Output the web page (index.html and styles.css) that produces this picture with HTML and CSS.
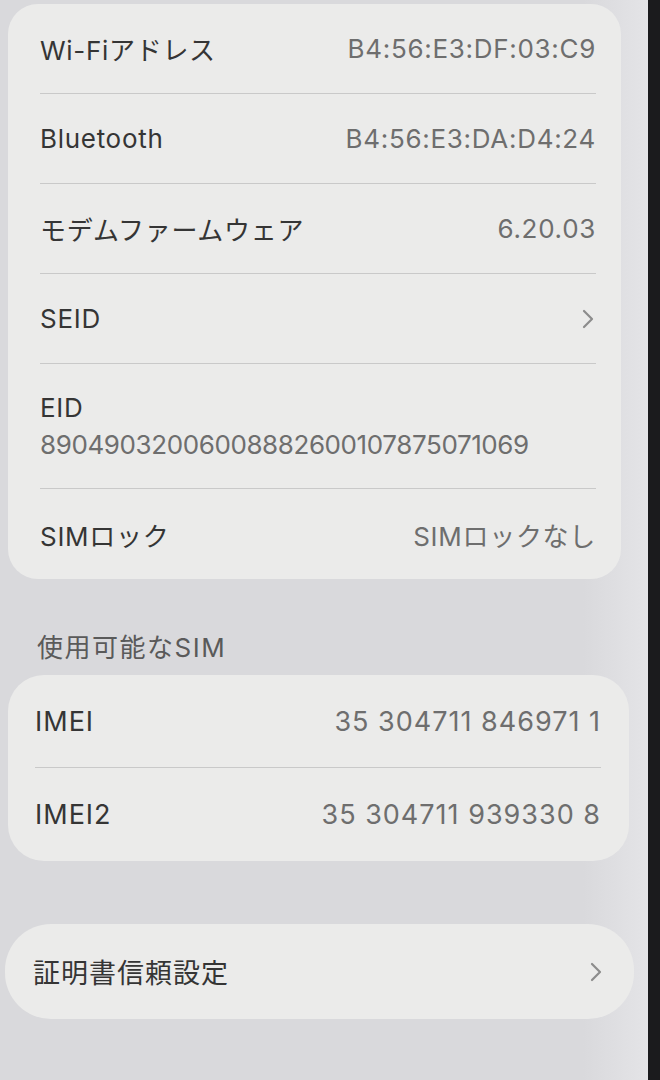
FILE: index.html
```html
<!DOCTYPE html>
<html lang="ja">
<head>
  <meta charset="utf-8">
  <title>情報</title>
  <link rel="stylesheet" href="styles.css">
</head>
<body>
  <div class="screen">
    <div class="card card-info">
      <div class="row"><span class="label">Wi-Fiアドレス</span><span class="value">B4:56:E3:DF:03:C9</span></div>
      <div class="row"><span class="label">Bluetooth</span><span class="value">B4:56:E3:DA:D4:24</span></div>
      <div class="row"><span class="label">モデムファームウェア</span><span class="value">6.20.03</span></div>
      <div class="row">
        <span class="label">SEID</span>
        <svg class="chevron" width="12" height="20" viewBox="0 0 12 20"><path d="M2 2 L10 10 L2 18" fill="none" stroke="#8c8c8c" stroke-width="2.2" stroke-linecap="round" stroke-linejoin="round"/></svg>
      </div>
      <div class="row row-tall">
        <span class="label">EID</span>
        <span class="value eid">89049032006008882600107875071069</span>
      </div>
      <div class="row"><span class="label">SIMロック</span><span class="value">SIMロックなし</span></div>
    </div>

    <div class="section-title">使用可能なSIM</div>

    <div class="card card-sim">
      <div class="row"><span class="label">IMEI</span><span class="value">35 304711 846971 1</span></div>
      <div class="row"><span class="label">IMEI2</span><span class="value">35 304711 939330 8</span></div>
    </div>

    <div class="card card-cert">
      <div class="row">
        <span class="label">証明書信頼設定</span>
        <svg class="chevron" width="12" height="20" viewBox="0 0 12 20"><path d="M2 2 L10 10 L2 18" fill="none" stroke="#8c8c8c" stroke-width="2.2" stroke-linecap="round" stroke-linejoin="round"/></svg>
      </div>
    </div>
  </div>
  <div class="bezel"></div>
</body>
</html>
```

FILE: styles.css
```css
body {
  margin: 0;
  height: 1080px;
  display: flex;
  overflow: hidden;
  background-color: #d8d8db;
  font-family: Inter, "Noto Sans CJK JP", sans-serif;
  font-size: 26px;
  letter-spacing: 0.7px;
}

.screen {
  flex: 1;
  padding: 4px 0 0 8px;
  display: flex;
  flex-direction: column;
  background: linear-gradient(to right, #d9d9dc 90%, #e4e4e7);
}

.bezel {
  width: 12px;
  background-color: #1b1b1d;
}

.card {
  background-color: #ebebea;
}

.card-info {
  margin-right: 27px;
  border-radius: 30px;
  padding: 0 25px 0 32px;
}

.card-sim {
  margin-top: 4px;
  margin-right: 19px;
  border-radius: 36px;
  padding: 0 28px 0 27px;
  font-size: 27px;
  letter-spacing: 1px;
}

.card-cert {
  margin: 63px 14px 0 -3px;
  border-radius: 46px;
  padding: 0 30px 0 28px;
  font-size: 27px;
  letter-spacing: 1px;
}

.row {
  height: 90px;
  display: flex;
  align-items: center;
  justify-content: space-between;
  border-bottom: 1px solid #c9c9c9;
  box-sizing: border-box;
}

.row:last-child {
  border-bottom: none;
}

.card-sim .row {
  height: 93px;
}

.card-cert .row {
  height: 95px;
}

.row-tall {
  height: 125px;
  flex-direction: column;
  align-items: flex-start;
  justify-content: center;
  gap: 6px;
}

.label {
  color: #353535;
}

.value {
  color: #6e6e6e;
}

.eid {
  letter-spacing: -0.4px;
}

.chevron {
  margin-right: 2px;
}

.section-title {
  color: #5a5a5a;
  font-size: 26px;
  letter-spacing: 1.5px;
  padding: 48px 0 0 29px;
  height: 44px;
}
```
